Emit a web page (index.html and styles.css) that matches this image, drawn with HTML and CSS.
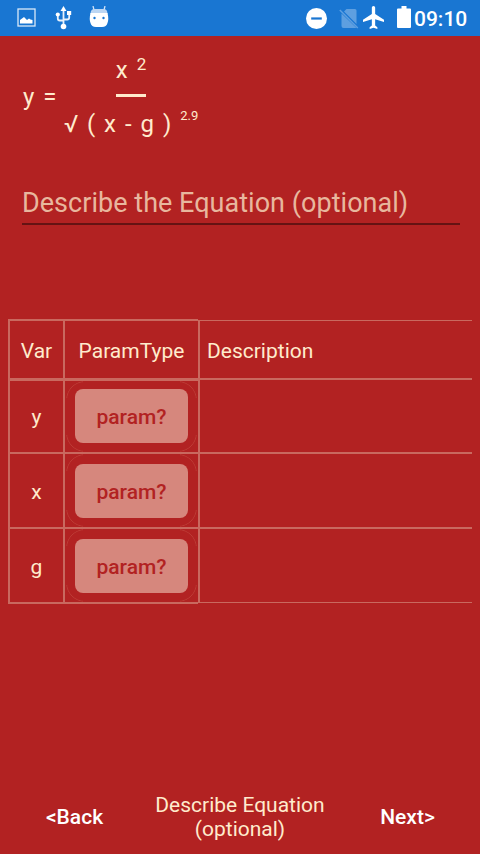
FILE: index.html
```html
<!DOCTYPE html>
<html lang="en">
<head>
<meta charset="utf-8">
<title>Describe Equation</title>
<link rel="stylesheet" href="styles.css">
</head>
<body>
<header class="status">
  <svg class="ic-image" width="19" height="19" viewBox="0 0 19 19"><rect x="1" y="1" width="17" height="17" fill="none" stroke="#d9e8f8" stroke-width="1.3"/><path d="M3 15.500V12l2-1.500 2-1.500 3 3 2-1.500 1.500 1 2 .5v3.500z" fill="#fff"/></svg>
  <svg class="ic-usb" width="17" height="24" viewBox="0 0 17 24"><g fill="none" stroke="#e8f1fb" stroke-width="1.800"><path d="M8.500 4v16M2.800 9v3.500q0 2 2 2h3.700M14.200 8v3.500q0 2-2 2H8.500"/></g><g fill="#fff"><path d="M8.500 0l3 5h-6z"/><circle cx="8.500" cy="20.500" r="2.800"/><circle cx="2.800" cy="8.500" r="2.100"/><path d="M12 5h4.200v4H12z"/></g></svg>
  <svg class="ic-droid" width="20" height="22" viewBox="0 0 20 22"><path d="M5 4L4 0M15 4l1-4" stroke="#d0e2f7" stroke-width="1.300"/><path d="M1.500 8q0-5 4-5h9q4 0 4 5z" fill="#bcd6f3"/><path d="M1.500 7h17q1.500 6 0 10-1 4-5.500 4H7q-4.500 0-5.500-4-1.500-4 0-10z" fill="#fff"/><circle cx="5.500" cy="12" r="1.200" fill="#1976d2"/><circle cx="14.500" cy="12" r="1.200" fill="#1976d2"/></svg>
  <span class="fill"></span>
  <svg class="ic-dnd" width="21" height="21" viewBox="0 0 21 21"><circle cx="10.500" cy="10.500" r="10.500" fill="#fff"/><path d="M5.200 10.500h10.600" stroke="#1976d2" stroke-width="2.200"/></svg>
  <svg class="ic-sim" width="20" height="21" viewBox="0 0 20 21"><path d="M2.500 5.500L17.500 20H4.500q-2 0-2-2zM5 3.500L7.500 1H16q1.500 0 1.500 1.500V16z" fill="#5e9fe0"/><path d="M.8 2l18 18" stroke="#5e9fe0" stroke-width="1.500"/></svg>
  <svg class="ic-plane" width="21" height="23" viewBox="2 2 19 20" preserveAspectRatio="none"><path d="M21 16v-2l-8-5V3.500c0-.83-.67-1.500-1.500-1.500S10 2.670 10 3.500V9l-8 5v2l8-2.500V19l-2 1.500V22l3.500-1 3.500 1v-1.500L13 19v-5.500l8 2.500z" fill="#fff"/></svg>
  <svg class="ic-batt" width="14" height="22" viewBox="0 0 14 22"><path d="M1 2.500h3.500V0h5v2.500H13q1 0 1 1V21q0 1-1 1H1q-1 0-1-1V3.500q0-1 1-1z" fill="#fff"/></svg>
  <time class="clock">09:10</time>
</header>
<main>
  <section class="equation">
    <span class="lhs">y =</span>
    <div class="fraction">
      <div class="num"><span>x</span><sup class="pow">2</sup></div>
      <div class="bar"></div>
      <div class="den"><span>√ ( x - g )</span><sup class="pow-small">2.9</sup></div>
    </div>
  </section>
  <div class="field">Describe the Equation (optional)</div>
  <section class="table">
    <div class="cell head">Var</div><div class="cell head">ParamType</div><div class="cell head desc">Description</div>
    <div class="cell first">y</div><div class="cell first action"><button class="param">param?</button></div><div class="cell desc"></div>
    <div class="cell">x</div><div class="cell action"><button class="param">param?</button></div><div class="cell desc"></div>
    <div class="cell last">g</div><div class="cell last action"><button class="param">param?</button></div><div class="cell desc last"></div>
  </section>
</main>
<footer class="nav">
  <button class="link">&lt;Back</button>
  <div class="title">Describe Equation (optional)</div>
  <button class="link next">Next&gt;</button>
</footer>
</body>
</html>
```
FILE: styles.css
```css
* { box-sizing: border-box; }
body {
  margin: 0;
  height: 854px;
  display: flex;
  flex-direction: column;
  overflow: hidden;
  background: #b22222;
  color: #ffebcd;
  font-family: Roboto, "Liberation Sans", sans-serif;
  font-size: 21px;
}
button { border: 0; padding: 0; font: inherit; background: none; }
.status {
  height: 36px;
  flex: none;
  display: flex;
  align-items: center;
  padding: 0 12px 0 17px;
  background: #1976d2;
  color: #fff;
}
.status svg { flex: none; display: block; }
.fill { flex: 1; }
.ic-image { margin-top: -1px; }
.ic-usb { margin-left: 19px; }
.ic-droid { margin-left: 17px; margin-top: -3px; }
.ic-sim { margin-left: 12px; }
.ic-plane { margin-left: 4px; margin-top: -1px; }
.ic-batt { margin-left: 13px; margin-top: -2px; }
.clock { margin-left: 3px; padding-top: 1px; font-size: 21px; font-weight: 500; width: 54px; white-space: nowrap; }

main { flex: 1; }
.equation {
  display: flex;
  height: 120px;
  padding-left: 23px;
  font-size: 24px;
  line-height: 28px;
  white-space: nowrap;
  word-spacing: 3px;
}
.lhs { width: 42px; padding-top: 47px; }
.fraction { width: 132px; display: flex; flex-direction: column; align-items: center; }
.num { display: flex; height: 58px; padding-top: 20px; gap: 9px; }
.pow { font-size: 17px; line-height: 16px; }
.bar { width: 30px; height: 3px; background: #ffebcd; }
.den { display: flex; padding-top: 13px; gap: 9px; }
.pow-small { font-size: 13px; line-height: 12px; }
.field {
  height: 46px;
  margin: 23px 20px 0 22px;
  padding-top: 8px;
  font-size: 27px;
  line-height: 32px;
  letter-spacing: 0.03px;
  color: #e8b79e;
  border-bottom: 2px solid #651313;
}
.table {
  display: grid;
  grid-template-columns: 55px 135px 274px;
  grid-template-rows: 59px 74px 75px 77px;
  margin: 94px 8px 0;
}
.cell {
  display: flex;
  align-items: center;
  justify-content: center;
  padding-top: 2px;
  border: 0 solid #c9695f;
  border-width: 2px 0 0 2px;
}
.first { border-top-width: 3px; padding-top: 0; }
.last { border-bottom-width: 2px; }
.head { padding-top: 3px; }
.desc { justify-content: flex-start; padding-left: 7px; }
.desc.head { border-top-width: 1px; margin-top: 1px; }
.desc.last { border-bottom-width: 1px; margin-bottom: 1px; }
.action { position: relative; align-items: flex-start; padding-top: 10px; }
.action.first { padding-top: 8px; }
.action::after {
  content: "";
  position: absolute;
  inset: 0 1px;
  border: 1px solid #bd3d37;
  border-radius: 19px;
  mask:
    linear-gradient(#000, #000) 0 0 / 17px 17px no-repeat,
    linear-gradient(#000, #000) 100% 0 / 17px 17px no-repeat,
    linear-gradient(#000, #000) 0 100% / 17px 17px no-repeat,
    linear-gradient(#000, #000) 100% 100% / 17px 17px no-repeat;
}
.param {
  display: block;
  width: 113px;
  height: 54px;
  padding-top: 2px;
  border-radius: 8px;
  background: #d6877d;
  color: #b22222;
  font-weight: 500;
}
.nav {
  flex: none;
  height: 75px;
  display: grid;
  grid-template-columns: 148px 184px 148px;
  align-items: center;
  text-align: center;
}
.link { padding-left: 1px; color: #fff; font-weight: 500; }
.next { padding-left: 3px; }
.title { line-height: 24px; }
```
